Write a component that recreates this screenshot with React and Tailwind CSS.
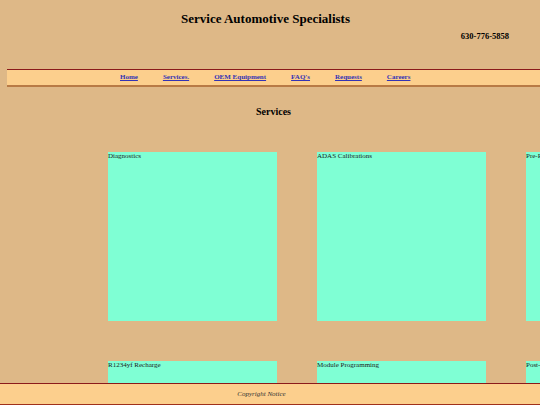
import React from "react";

const links = ["Home", "Services.", "OEM Equipment", "FAQ's", "Requests", "Careers"];
const row1 = ["Diagnostics", "ADAS Calibrations", "Pre-Purchase Inspections"];
const row2 = ["R1234yf Recharge", "Module Programming", "Post-Collision Scans"];

function Box({ label }) {
  return (
    <div className="w-[169px] h-[169px] shrink-0 bg-[#7fffd4] text-[7px] leading-[9px] text-[#1a1a1a] overflow-hidden whitespace-nowrap">
      {label}
    </div>
  );
}

export default function App() {
  return (
    <div className="relative h-[405px] w-[540px] overflow-hidden bg-[#deb887] font-['Liberation_Serif',serif] text-black">
      <h1 className="pt-[11px] pr-[9px] text-center text-[13px] font-bold leading-[16px]">
        Service Automotive Specialists
      </h1>
      <div className="mt-[4px] pr-[31px] text-right text-[8.5px] font-bold leading-[10px]">630-776-5858</div>
      <nav className="ml-[7px] mt-[28px] flex h-[18px] items-center gap-[25px] border-t border-b-2 border-t-[#8b1a1a] border-b-[#b87a45] bg-[#fccf8d] pl-[113px] text-[7px] font-bold">
        {links.map((l) => (
          <a key={l} href="#" className="text-[#3333b5] underline">
            {l}
          </a>
        ))}
      </nav>
      <h2 className="mt-[19px] ml-[7px] text-center text-[10px] font-bold leading-[12px]">Services</h2>
      <div className="mt-[34px] ml-[108px] flex flex-col gap-[40px]">
        <div className="flex gap-[40px]">
          {row1.map((l) => (
            <Box key={l} label={l} />
          ))}
        </div>
        <div className="flex gap-[40px]">
          {row2.map((l) => (
            <Box key={l} label={l} />
          ))}
        </div>
      </div>
      <footer className="absolute bottom-0 left-0 flex h-[22px] w-full items-center justify-center border-t border-b border-t-[#8b1a1a] border-b-[#a0301a] bg-[#fccf8d] pr-[17px] text-[7px] italic text-[#333]">
        Copyright Notice
      </footer>
    </div>
  );
}
